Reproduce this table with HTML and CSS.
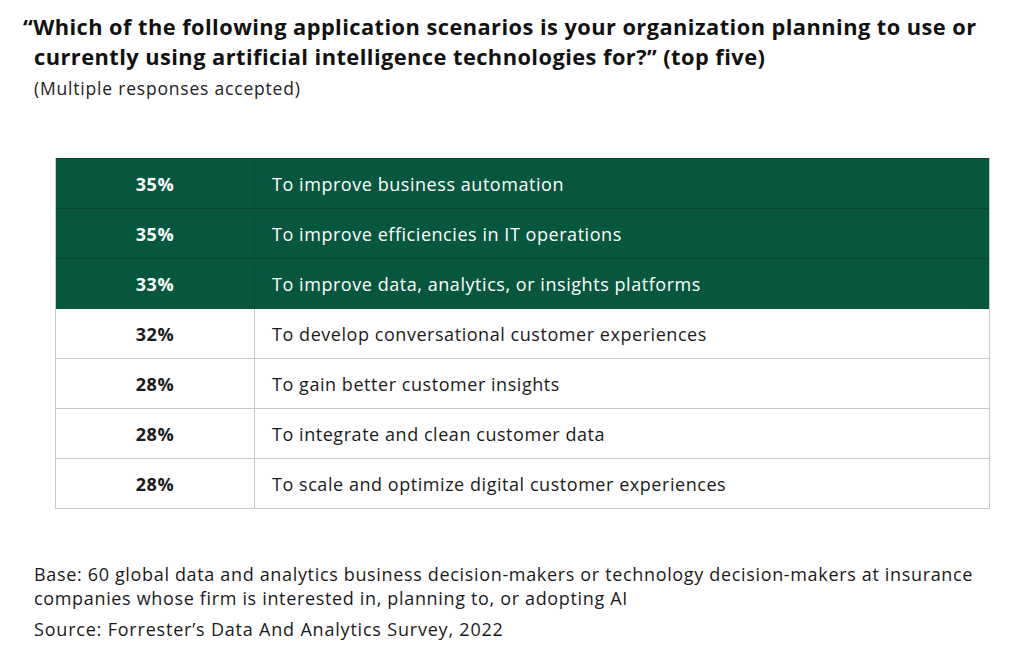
FILE: index.html
```html
<!DOCTYPE html>
<html>
<head>
<meta charset="utf-8">
<link rel="stylesheet" href="styles.css">
</head>
<body>
<div class="page">
  <header class="head">
    <h1 class="title"><span class="q">“</span>Which of the following application scenarios is your organization planning to use or<br>currently using artificial intelligence technologies for?” (top five)</h1>
    <p class="sub">(Multiple responses accepted)</p>
  </header>
  <div class="table">
    <div class="row dark"><div class="pct">35%</div><div class="label">To improve business automation</div></div>
    <div class="row dark"><div class="pct">35%</div><div class="label">To improve efficiencies in IT operations</div></div>
    <div class="row dark"><div class="pct">33%</div><div class="label">To improve data, analytics, or insights platforms</div></div>
    <div class="row"><div class="pct">32%</div><div class="label">To develop conversational customer experiences</div></div>
    <div class="row"><div class="pct">28%</div><div class="label">To gain better customer insights</div></div>
    <div class="row"><div class="pct">28%</div><div class="label">To integrate and clean customer data</div></div>
    <div class="row"><div class="pct">28%</div><div class="label">To scale and optimize digital customer experiences</div></div>
  </div>
  <footer class="foot">
    <p class="base">Base: 60 global data and analytics business decision-makers or technology decision-makers at insurance<br>companies whose firm is interested in, planning to, or adopting AI</p>
    <p class="src">Source: Forrester’s Data And Analytics Survey, 2022</p>
  </footer>
</div>
</body>
</html>
```

FILE: styles.css
```css
* { box-sizing: border-box; }
html, body { margin: 0; padding: 0; background: #fff; }
body { font-family: "Open Sans", "Liberation Sans", sans-serif; color: #1a1a1a; }
.page { width: 1024px; height: 645px; padding: 12px 0 0 34px; overflow: hidden; }
.title { margin: 0; font-size: 21.8px; font-weight: 700; line-height: 30px; letter-spacing: 0.45px; color: #111; white-space: nowrap; }
.q { margin-left: -11px; }
.sub { margin: 4px 0 0; font-size: 17.5px; line-height: 24px; letter-spacing: 0.8px; color: #222; }
.table { margin: 58px 0 0 21px; width: 935px; border: 1px solid #c8c8c8; border-top: none; }
.row { display: flex; height: 50px; border-top: 1px solid #c8c8c8; }
.row.dark { background: #07573f; color: #fff; border-top-color: #054632; }
.row.dark + .row:not(.dark) { border-top-color: #07573f; }
.pct { width: 199px; flex: none; display: flex; align-items: center; justify-content: center; font-weight: 700; font-size: 18px; letter-spacing: 0.6px; border-right: 1px solid #c8c8c8; }
.row.dark .pct { border-right-color: #0b4d39; }
.label { flex: 1; display: flex; align-items: center; padding-left: 17px; font-size: 18px; letter-spacing: 0.55px; }
.foot { margin-top: 53px; font-size: 18px; line-height: 24px; letter-spacing: 0.66px; color: #1a1a1a; white-space: nowrap; }
.base { margin: 0; }
.src { margin: 7px 0 0; letter-spacing: 0.8px; }
```
